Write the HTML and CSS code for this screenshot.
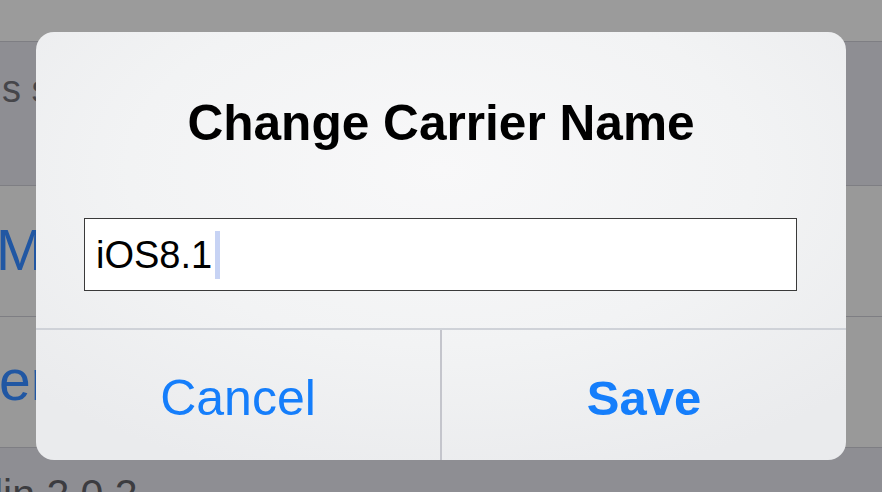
FILE: index.html
```html
<!DOCTYPE html>
<html>
<head>
<meta charset="utf-8">
<link rel="stylesheet" href="styles.css">
</head>
<body>
<div class="screen">
  <div class="nav"></div>
  <div class="section-header"><span class="header-text">s s</span></div>
  <div class="row"><span class="row-text row-text-m">My</span></div>
  <div class="row"><span class="row-text row-text-er">er</span></div>
  <div class="footer"><span class="footer-text">lin 2.0.2</span></div>

  <div class="alert">
    <div class="alert-body">
      <div class="alert-title">Change Carrier Name</div>
      <div class="field">
        <span class="field-text">iOS8.1</span><span class="caret"></span>
      </div>
    </div>
    <div class="alert-actions">
      <div class="action">Cancel</div>
      <div class="action action-bold">Save</div>
    </div>
  </div>
</div>
</body>
</html>
```

FILE: styles.css
```css
* { box-sizing: border-box; }
html, body {
  margin: 0;
  padding: 0;
  width: 882px;
  height: 492px;
  overflow: hidden;
  font-family: "Liberation Sans", Arial, sans-serif;
}
.screen {
  position: relative;
  width: 882px;
  height: 492px;
  overflow: hidden;
  background: #8e8e93;
}
.nav {
  height: 42px;
  background: #9b9b9b;
  border-bottom: 1px solid #7e7e83;
}
.section-header {
  height: 144px;
  background: #8e8e93;
  border-bottom: 1px solid #7e7e83;
  padding-top: 25px;
  padding-left: 2px;
}
.header-text {
  font-size: 38px;
  line-height: 44px;
  color: #46464a;
  white-space: nowrap;
}
.row {
  height: 131px;
  background: #999999;
  border-bottom: 1px solid #7e7e83;
  white-space: nowrap;
}
.row-text {
  display: block;
  font-size: 57px;
  line-height: 66px;
  color: #2157a3;
}
.row-text-m {
  padding-top: 31px;
  margin-left: -4px;
}
.row-text-er {
  padding-top: 30px;
  margin-left: -1px;
}
.footer {
  height: 44px;
  background: #8e8e93;
  padding-top: 23px;
}
.footer-text {
  display: block;
  font-size: 41px;
  line-height: 46px;
  color: #3c3c40;
  white-space: nowrap;
  margin-left: -6px;
}

.alert {
  position: absolute;
  left: 36px;
  top: 32px;
  width: 810px;
  height: 428px;
  border-radius: 18px;
  overflow: hidden;
  background: radial-gradient(ellipse 70% 75% at 50% 32%, #f8f8f9 0%, #f2f3f4 55%, #eaebed 100%);
  display: flex;
  flex-direction: column;
}
.alert-body {
  height: 296px;
  padding-top: 62px;
  display: flex;
  flex-direction: column;
  align-items: center;
}
.alert-title {
  font-size: 49.6px;
  line-height: 58px;
  font-weight: bold;
  color: #000;
  white-space: nowrap;
}
.field {
  margin-top: 66px;
  align-self: stretch;
  margin-left: 48px;
  margin-right: 49px;
  height: 73px;
  border: 1px solid #3a3a3a;
  background: #ffffff;
  display: flex;
  align-items: center;
  padding-left: 11px;
}
.field-text {
  font-size: 38px;
  line-height: 44px;
  color: #000;
}
.caret {
  width: 5px;
  height: 48px;
  margin-left: 3px;
  background: #c7d3f4;
}
.alert-actions {
  flex: 1;
  display: flex;
  border-top: 2px solid #cfd2d8;
}
.action {
  flex: 1;
  display: flex;
  align-items: center;
  justify-content: center;
  padding-top: 5px;
  font-size: 50px;
  line-height: 58px;
  color: #157efb;
}
.action + .action {
  border-left: 2px solid #c4c5cc;
}
.action-bold {
  font-weight: bold;
  font-size: 49px;
}
```
